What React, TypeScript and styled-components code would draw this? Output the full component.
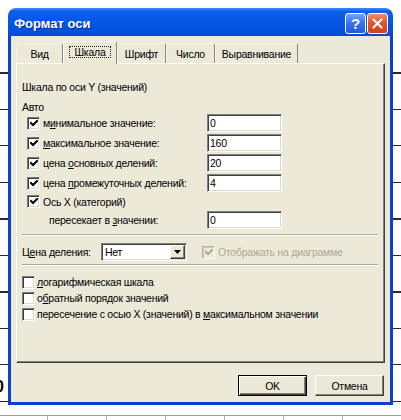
import React from "react";
import styled, { createGlobalStyle } from "styled-components";

const UI_FONT = `10.5px "Liberation Sans", Arial, sans-serif`;

const GlobalStyle = createGlobalStyle`
  html, body { margin: 0; padding: 0; background: #fff; }
  body { font: ${UI_FONT}; letter-spacing: -0.25px; color: #000; }
  * { box-sizing: border-box; }
`;

const Sheet = styled.div`
  position: relative;
  width: 401px;
  height: 420px;
  overflow: hidden;
  padding: 8px 0 0 8px;
  background-color: #fff;
  background-image:
    repeating-linear-gradient(180deg, transparent 0 32px, #2a2a2a 32px 33.5px, transparent 33.5px 36.5px),
    linear-gradient(#9c9c9c, #9c9c9c),
    repeating-linear-gradient(90deg, transparent 0 58px, #b4b4b4 58px 59px);
  background-repeat: no-repeat;
  background-size: 100% 370px, 100% 1px, 100% 5px;
  background-position: 0 40px, 0 415px, -11px 416px;
`;

const CellValue = styled.span`
  position: absolute;
  left: -5px;
  top: 378px;
  font: bold 16px "Liberation Sans", Arial, sans-serif;
  letter-spacing: 0;
`;

const Window = styled.div`
  width: 385px;
  height: 397px;
  display: flex;
  flex-direction: column;
  border-radius: 8px 8px 0 0;
  overflow: hidden;
`;

const TitleBar = styled.div`
  height: 28px;
  flex: none;
  display: flex;
  align-items: center;
  justify-content: space-between;
  padding: 2px 5px 0 6px;
  background: linear-gradient(180deg, #3f8cf6 0%, #0c60ea 12%, #0558e6 45%, #0352de 85%, #0848c9 100%);
`;

const Title = styled.span`
  color: #fff;
  font: bold 13px "Liberation Sans", Arial, sans-serif;
  letter-spacing: 0;
  text-shadow: 1px 1px 0 #0a2a9a;
`;

const CaptionButtons = styled.div`
  display: flex;
  gap: 1px;
`;

const CaptionButton = styled.div<{ $variant: "help" | "close" }>`
  width: 21px;
  height: 21px;
  border: 1px solid #fff;
  border-radius: 3px;
  display: flex;
  align-items: center;
  justify-content: center;
  color: #fff;
  font: bold 15px "Liberation Sans", Arial, sans-serif;
  letter-spacing: 0;
  background: ${(p) =>
    p.$variant === "close"
      ? "linear-gradient(180deg, #ef8d6e 0%, #e2582f 45%, #cf4219 100%)"
      : "linear-gradient(180deg, #6ea4fb 0%, #3a74ee 45%, #2459e0 100%)"};
`;

const Body = styled.div`
  flex: 1;
  display: flex;
  flex-direction: column;
  background: #ece9d8;
  border: 3px solid #0841d4;
  border-top: none;
  padding: 5px 5px 0 5px;
`;

const TabStrip = styled.div`
  height: 22px;
  flex: none;
  display: flex;
  align-items: flex-end;
  position: relative;
  z-index: 1;
`;

const Tab = styled.div<{ $w: number; $active?: boolean }>`
  width: ${(p) => p.$w}px;
  height: ${(p) => (p.$active ? 23 : 20)}px;
  margin-bottom: ${(p) => (p.$active ? -1 : 0)}px;
  display: flex;
  align-items: center;
  justify-content: center;
  background: #ece9d8;
  border-top: 1px solid ${(p) => (p.$active ? "#fff" : "#f6f4ec")};
  border-left: 1px solid ${(p) => (p.$active ? "#fff" : "#f6f4ec")};
  border-right: 1px solid #8a877c;
  border-radius: 2px 2px 0 0;
  padding-bottom: ${(p) => (p.$active ? 2 : 0)}px;
`;

const FocusText = styled.span`
  border: 1px dotted #222;
  padding: 0 4px;
  line-height: 10px;
`;

const TabPanel = styled.div`
  height: 300px;
  flex: none;
  display: flex;
  flex-direction: column;
  border-top: 1px solid #fff;
  border-left: 1px solid #fff;
  border-right: 1px solid #404040;
  border-bottom: 1px solid #404040;
  box-shadow: inset -1px -1px 0 #808080;
  padding: 16px 5px 0 5px;
`;

const SectionTitle = styled.div`
  line-height: 14px;
  height: 14px;
`;

const GroupLabel = styled.div`
  margin-top: 7px;
  line-height: 12px;
  height: 12px;
`;

const FieldRow = styled.div<{ $h: number }>`
  height: ${(p) => p.$h}px;
  display: grid;
  grid-template-columns: 185px 75px;
  align-items: center;
`;

const CheckLabel = styled.label<{ $indent?: number; $gap?: number; $disabled?: boolean }>`
  display: flex;
  align-items: center;
  gap: ${(p) => p.$gap ?? 3}px;
  padding-left: ${(p) => p.$indent ?? 0}px;
  white-space: nowrap;
  color: ${(p) => (p.$disabled ? "#aca899" : "#000")};
`;

const Box = styled.span<{ $disabled?: boolean }>`
  width: 13px;
  height: 13px;
  flex: none;
  display: flex;
  align-items: center;
  justify-content: center;
  border: 1px solid;
  border-color: ${(p) => (p.$disabled ? "#b9b6a8 #fff #fff #b9b6a8" : "#7c7c7c #fff #fff #7c7c7c")};
  box-shadow: ${(p) =>
    p.$disabled ? "inset 1px 1px 0 #c9c6b8" : "inset 1px 1px 0 #3a3a3a, inset -1px -1px 0 #dcd9cc"};
  background: ${(p) => (p.$disabled ? "#ece9d8" : "#fff")};
`;

const Indent = styled.span`
  padding-left: 27px;
`;

const TextField = styled.input`
  width: 75px;
  height: 18px;
  border: 1px solid;
  border-color: #808080 #fff #fff #808080;
  box-shadow: inset 1px 1px 0 #404040, inset -1px -1px 0 #dcd9cc;
  background: #fff;
  font: ${UI_FONT};
  letter-spacing: -0.25px;
  color: #000;
  padding: 0 2px;
  outline: none;
`;

const Separator = styled.div<{ $top: number }>`
  height: 2px;
  margin-top: ${(p) => p.$top}px;
  margin-right: 1px;
  border-top: 1px solid #aca899;
  border-bottom: 1px solid #fff;
`;

const DivisionRow = styled.div`
  margin-top: 7px;
  height: 18px;
  display: flex;
  align-items: center;
`;

const DivisionLabel = styled.span`
  width: 79px;
  flex: none;
`;

const Select = styled.div`
  width: 86px;
  height: 18px;
  flex: none;
  display: flex;
  align-items: center;
  justify-content: space-between;
  border: 1px solid;
  border-color: #808080 #fff #fff #808080;
  box-shadow: inset 1px 1px 0 #404040, inset -1px -1px 0 #dcd9cc;
  background: #fff;
  padding: 1px 1px 1px 3px;
  margin-right: 15px;
`;

const SelectArrow = styled.span`
  width: 15px;
  height: 14px;
  display: flex;
  align-items: center;
  justify-content: center;
  background: #ece9d8;
  border: 1px solid;
  border-color: #fff #404040 #404040 #fff;
  box-shadow: inset -1px -1px 0 #808080;
`;

const OptionList = styled.div`
  margin-top: 8px;
  display: flex;
  flex-direction: column;
`;

const OptionRow = styled.div`
  height: 16px;
  display: flex;
  align-items: center;
`;

const ButtonBar = styled.div`
  margin-top: 12px;
  display: flex;
  justify-content: flex-end;
  gap: 8px;
  padding-right: 1px;
`;

const PushButton = styled.button<{ $default?: boolean }>`
  width: 69px;
  height: 21px;
  background: #ece9d8;
  font: ${UI_FONT};
  letter-spacing: -0.25px;
  color: #000;
  padding: 0;
  border: 1px solid;
  border-color: ${(p) => (p.$default ? "#000" : "#fff #404040 #404040 #fff")};
  box-shadow: ${(p) =>
    p.$default
      ? "inset 1px 1px 0 #fff, inset -1px -1px 0 #404040, inset -2px -2px 0 #808080"
      : "inset -1px -1px 0 #808080"};
`;

const Key = styled.u`
  text-decoration-thickness: 1px;
  text-underline-offset: 1px;
`;

const Check = ({ color = "#000" }: { color?: string }) => (
  <svg width="8" height="7" viewBox="0 0 8 7">
    <path d="M1 3 L3 5 L7 1" fill="none" stroke={color} strokeWidth="2" strokeLinecap="square" />
  </svg>
);

const CheckBox = ({ checked, disabled }: { checked?: boolean; disabled?: boolean }) => (
  <Box $disabled={disabled}>{checked && <Check color={disabled ? "#aca899" : "#000"} />}</Box>
);

const tabs = [
  { label: "Вид", w: 47 },
  { label: "Шкала", w: 54, active: true },
  { label: "Шрифт", w: 49 },
  { label: "Число", w: 49 },
  { label: "Выравнивание", w: 83 },
];

export default function App() {
  return (
    <>
      <GlobalStyle />
      <Sheet>
        <CellValue>0</CellValue>
        <Window>
          <TitleBar>
            <Title>Формат оси</Title>
            <CaptionButtons>
              <CaptionButton $variant="help">?</CaptionButton>
              <CaptionButton $variant="close">
                <svg width="11" height="11" viewBox="0 0 11 11">
                  <path d="M1.5 1.5 L9.5 9.5 M9.5 1.5 L1.5 9.5" stroke="#fff" strokeWidth="2" strokeLinecap="round" />
                </svg>
              </CaptionButton>
            </CaptionButtons>
          </TitleBar>
          <Body>
            <TabStrip>
              {tabs.map((t) => (
                <Tab key={t.label} $w={t.w} $active={t.active}>
                  {t.active ? <FocusText>{t.label}</FocusText> : t.label}
                </Tab>
              ))}
            </TabStrip>
            <TabPanel>
              <SectionTitle>Шкала по оси Y (значений)</SectionTitle>
              <GroupLabel>Авто</GroupLabel>
              <FieldRow $h={20}>
                <CheckLabel $indent={5}>
                  <CheckBox checked />
                  <span>
                    м<Key>и</Key>нимальное значение:
                  </span>
                </CheckLabel>
                <TextField readOnly value="0" />
              </FieldRow>
              <FieldRow $h={20}>
                <CheckLabel $indent={5}>
                  <CheckBox checked />
                  <span>
                    <Key>м</Key>аксимальное значение:
                  </span>
                </CheckLabel>
                <TextField readOnly value="160" />
              </FieldRow>
              <FieldRow $h={20}>
                <CheckLabel $indent={5}>
                  <CheckBox checked />
                  <span>
                    цена <Key>о</Key>сновных делений:
                  </span>
                </CheckLabel>
                <TextField readOnly value="20" />
              </FieldRow>
              <FieldRow $h={20}>
                <CheckLabel $indent={5}>
                  <CheckBox checked />
                  <span>
                    цена <Key>п</Key>ромежуточных делений:
                  </span>
                </CheckLabel>
                <TextField readOnly value="4" />
              </FieldRow>
              <FieldRow $h={17}>
                <CheckLabel $indent={5}>
                  <CheckBox checked />
                  <span>Ось X (категорий)</span>
                </CheckLabel>
              </FieldRow>
              <FieldRow $h={19}>
                <Indent>
                  пересекает в <Key>з</Key>начении:
                </Indent>
                <TextField readOnly value="0" />
              </FieldRow>
              <Separator $top={5} />
              <DivisionRow>
                <DivisionLabel>
                  Ц<Key>е</Key>на деления:
                </DivisionLabel>
                <Select>
                  <span>Нет</span>
                  <SelectArrow>
                    <svg width="7" height="4" viewBox="0 0 7 4">
                      <path d="M0 0 H7 L3.5 4 Z" fill="#000" />
                    </svg>
                  </SelectArrow>
                </Select>
                <CheckLabel $disabled>
                  <CheckBox checked disabled />
                  <span>Отображать на диаграмме</span>
                </CheckLabel>
              </DivisionRow>
              <Separator $top={3} />
              <OptionList>
                <OptionRow>
                  <CheckLabel $gap={2}>
                    <CheckBox />
                    <span>
                      <Key>л</Key>огарифмическая шкала
                    </span>
                  </CheckLabel>
                </OptionRow>
                <OptionRow>
                  <CheckLabel $gap={2}>
                    <CheckBox />
                    <span>
                      о<Key>б</Key>ратный порядок значений
                    </span>
                  </CheckLabel>
                </OptionRow>
                <OptionRow>
                  <CheckLabel $gap={2}>
                    <CheckBox />
                    <span>
                      пересечение с осью X (значений) в <Key>м</Key>аксимальном значении
                    </span>
                  </CheckLabel>
                </OptionRow>
              </OptionList>
            </TabPanel>
            <ButtonBar>
              <PushButton $default>OK</PushButton>
              <PushButton>Отмена</PushButton>
            </ButtonBar>
          </Body>
        </Window>
      </Sheet>
    </>
  );
}
